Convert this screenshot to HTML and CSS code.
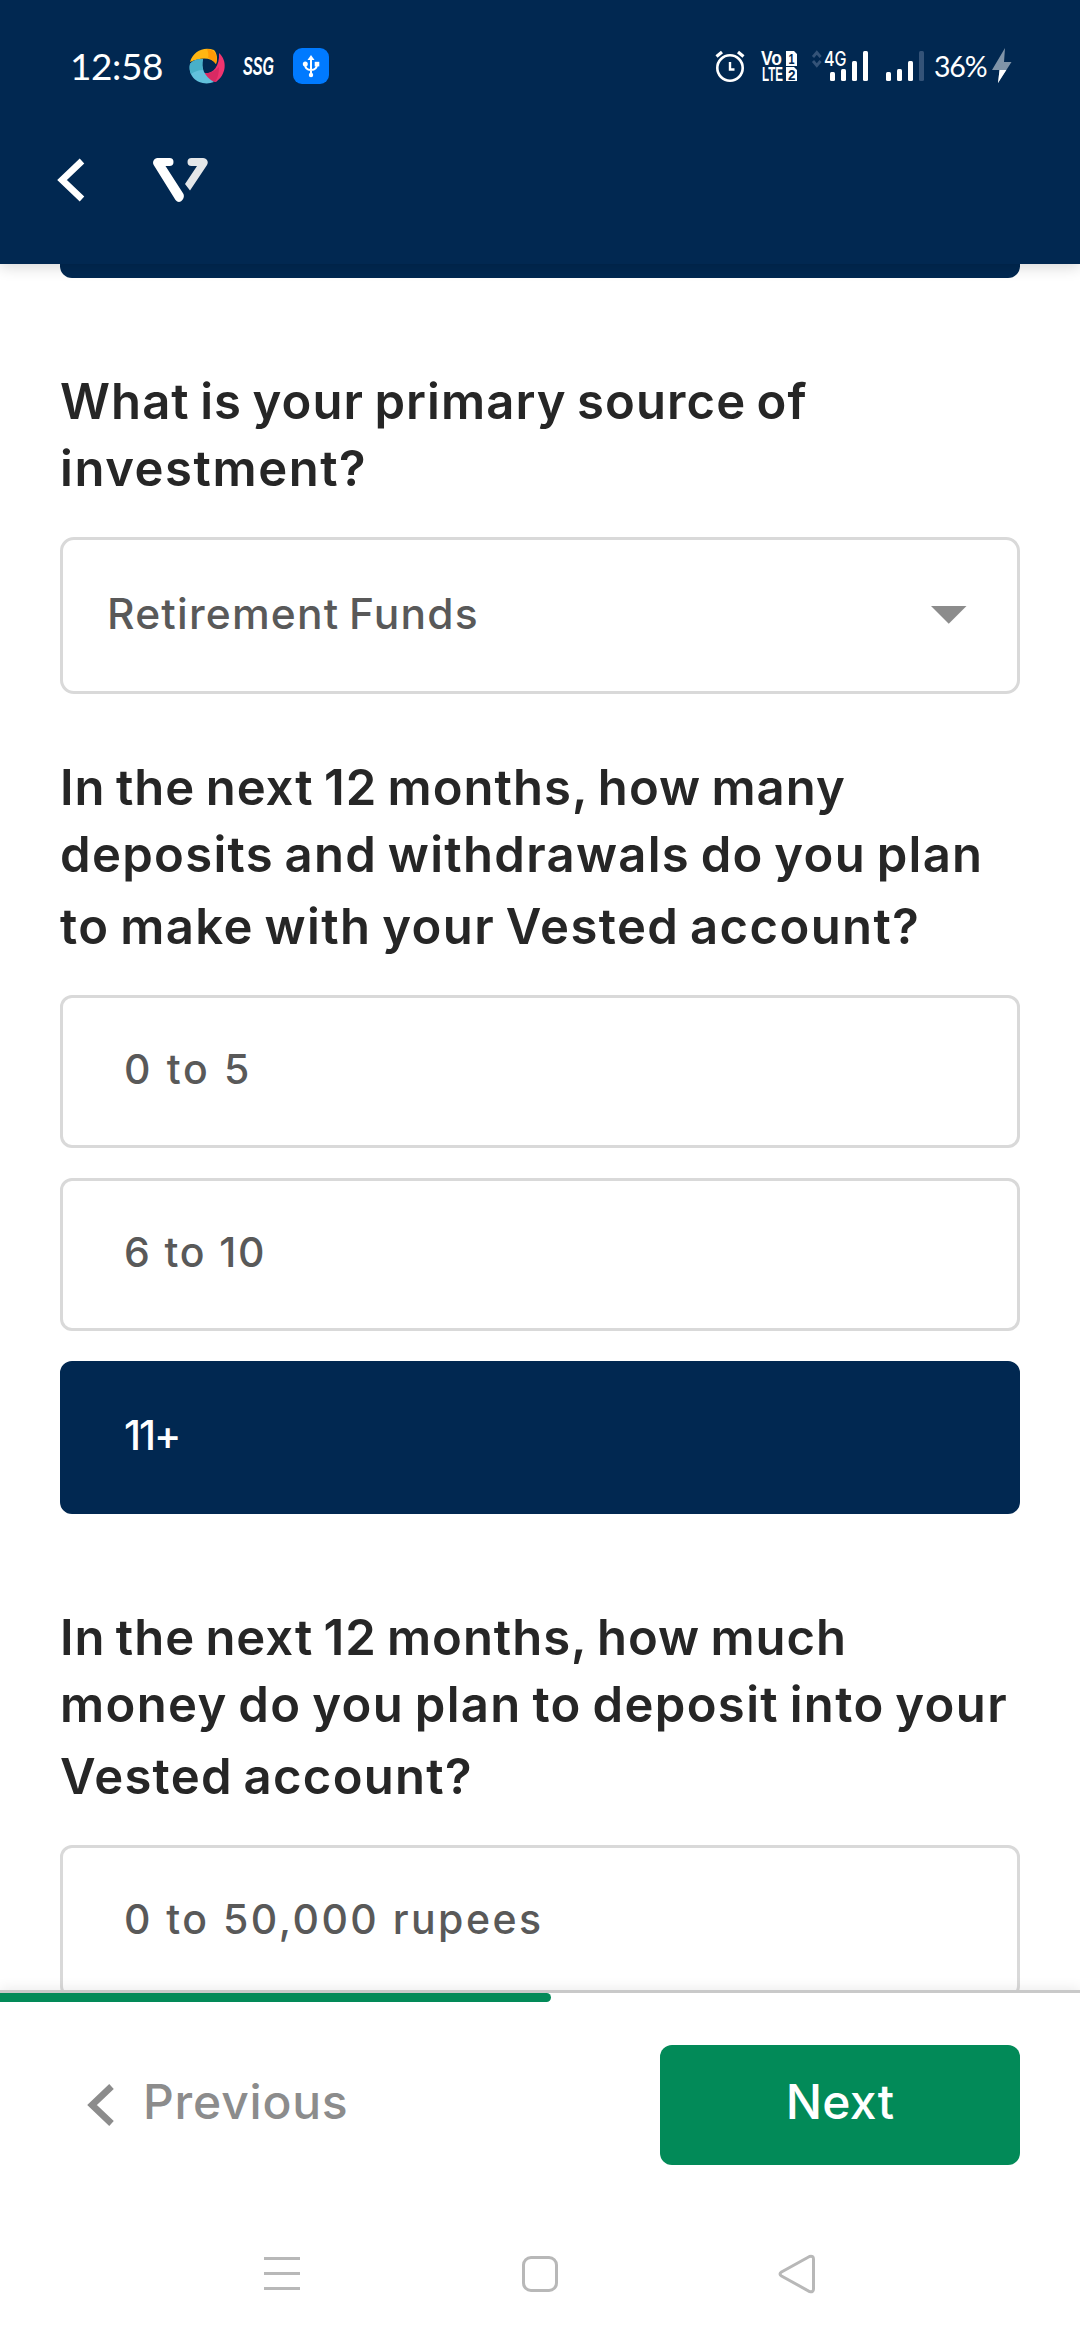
FILE: index.html
```
<!DOCTYPE html>
<html lang="en">
<head>
<meta charset="utf-8">
<title>Vested</title>
<link rel="stylesheet" href="styles.css">
</head>
<body>
<div class="screen">
  <header class="top">
    <div class="status">
      <div class="status-left">
        <span class="clock">12:58</span>
        <svg class="swirl" width="36" height="36" viewBox="0 0 36 36">
          <path d="M1 14C4 3 15-2 25 2c3 3 4 9 2 14C22 9 12 9 1 14z" fill="#ffb612"/>
          <path d="M18 1c8 0 11 7 9 15-2-3-5-5-8-6 1-3 0-6-1-9z" fill="#ff9a05"/>
          <path d="M30 5c9 8 7 22-3 29-6-1-11-4-13-9 8 2 17-5 16-20z" fill="#f0346f"/>
          <path d="M14 25c6 1 11-1 16-6 0 6-1 11-4 15-5-2-9-5-12-9z" fill="#d92a63"/>
          <path d="M1 16c3-4 8-5 13-5-2 9 1 17 11 23C12 39-2 30 1 16z" fill="#62c1dc"/>
          <path d="M1 16c3-4 8-5 13-5-1 4-1 8 0 11-5 0-9 2-12 4-1-3-2-6-1-10z" fill="#48b0c8"/>
        </svg>
        <svg class="ssg" width="34" height="22" viewBox="0 0 34 22"><text class="cond" x="1" y="20" font-size="25" font-style="italic" textLength="31" lengthAdjust="spacingAndGlyphs">SSG</text></svg>
        <svg width="36" height="36" viewBox="0 0 36 36">
          <rect width="36" height="36" rx="9" fill="#007aff"/>
          <g fill="none" stroke="#fff" stroke-width="2"><path d="M18 10v17M12 16c0 4 2 6 6 6s6-2 6-6"/></g>
          <g fill="#fff"><path d="M14.500 12 18 7l3.500 5z"/><circle cx="12.300" cy="16" r="2.500"/><circle cx="18" cy="27" r="2.200"/><rect x="21.700" y="13.800" width="4.600" height="4.600"/></g>
        </svg>
      </div>
      <div class="status-right">
        <svg class="alarm" width="30" height="32" viewBox="0 0 30 32"><g fill="none" stroke="#fff" stroke-width="2.600"><circle cx="15" cy="18" r="12.700"/><path d="M15 12v7.500h4.500" stroke-width="2.400"/><path d="M1.500 6.500 7 2M28.500 6.500 23 2" stroke-width="3.200"/></g></svg>
        <svg class="volte" width="37" height="32" viewBox="0 0 37 32">
          <g class="cond"><text x="0" y="15" font-size="20" textLength="21" lengthAdjust="spacingAndGlyphs">Vo</text><text x="1" y="31" font-size="20" textLength="21" lengthAdjust="spacingAndGlyphs">LTE</text></g>
          <path d="M25 1h8l3 3v12H25zM25 17h8l3 3v11H25z" fill="#fff"/>
          <g class="cond-dark" font-size="15"><text x="27.500" y="14" textLength="6" lengthAdjust="spacingAndGlyphs">1</text><text x="27" y="29.500" textLength="7.500" lengthAdjust="spacingAndGlyphs">2</text></g>
        </svg>
        <svg class="sig4g" width="57" height="32" viewBox="0 0 57 32">
          <path d="m1 7 3.800-4.500L8.600 7M1 11l3.800 4.500L8.600 11" fill="none" stroke="#345378" stroke-width="2.800"/>
          <text class="net" x="12" y="16" font-size="20" textLength="22.500" lengthAdjust="spacingAndGlyphs">4G</text>
          <g fill="#fff"><rect x="18" y="22" width="5" height="9" rx="1.500"/><rect x="29" y="19" width="5" height="12" rx="1.500"/><rect x="40" y="11" width="5" height="20" rx="1.500"/><rect x="51" y="1" width="5" height="30" rx="1.500"/></g>
        </svg>
        <svg class="sig" width="40" height="32" viewBox="0 0 40 32"><g fill="#fff"><rect x="1" y="22" width="5" height="9" rx="1.500"/><rect x="12" y="19" width="5" height="12" rx="1.500"/><rect x="23" y="11" width="5" height="20" rx="1.500"/></g><rect x="34" y="1" width="5" height="30" rx="1.500" fill="#345378"/></svg>
        <span class="battery">36%</span>
        <svg class="bolt" width="20" height="36" viewBox="0 0 20 36"><path d="M13 0 0 22h7.500L6 35l13.500-21H12z" fill="#8094a8"/><path d="M0 22h14.300L6 35 7.500 22z" fill="#fff"/></svg>
      </div>
    </div>
    <div class="appbar">
      <svg width="28" height="44" viewBox="0 0 28 44"><path d="M24 3 4 22l20 19" fill="none" stroke="#fff" stroke-width="6.600"/></svg>
      <svg class="logo" width="55" height="45" viewBox="0 0 55 45">
        <path d="M4.500 0h12a4 4 0 0 1 0 8h-4l18 28c2 5-4 11-8 6L.7 7C-1 4 1 0 4.500 0z" fill="#fff"/>
        <path d="M38.500 0H50c4 0 6 4 4 7L37 32.500l-5-6.500L44 8h-5.500a4 4 0 0 1 0-8z" fill="#e4e7e9"/>
      </svg>
    </div>
  </header>

  <main class="form">
    <div class="option option-prev"></div>

    <h2 class="question">
      <span class="q1a">What is your primary source of</span>
      <span class="q1b">investment?</span>
    </h2>
    <div class="select">
      <span class="value">Retirement Funds</span>
      <svg width="36" height="18" viewBox="0 0 36 18"><path d="M0 0h35.500L17.750 17.800z" fill="#8c8c8c"/></svg>
    </div>

    <h2 class="question question-deposits">
      <span class="q2a">In the next 12 months, how many</span>
      <span class="q2b">deposits and withdrawals do you plan</span>
      <span class="q2c">to make with your Vested account?</span>
    </h2>
    <div class="options">
      <div class="option o1">0 to 5</div>
      <div class="option o2">6 to 10</div>
      <div class="option o3 selected">11+</div>
    </div>

    <h2 class="question question-money">
      <span class="q3a">In the next 12 months, how much</span>
      <span class="q3b">money do you plan to deposit into your</span>
      <span class="q3c">Vested account?</span>
    </h2>
    <div class="options">
      <div class="option o4">0 to 50,000 rupees</div>
    </div>
  </main>

  <footer class="bottom">
    <div class="progress"></div>
    <div class="actions">
      <div class="previous">
        <svg width="28" height="44" viewBox="0 0 28 44"><path d="M24.500 3.500 5 22l19.500 18.500" fill="none" stroke="#8c8c8c" stroke-width="6.600"/></svg>
        <span>Previous</span>
      </div>
      <div class="next"><span>Next</span></div>
    </div>
    <nav class="sysnav">
      <svg width="38" height="42" viewBox="0 0 38 42"><path d="M1 5.500h36M1 20.500h36M1 35.500h36" stroke="#b8b8b8" stroke-width="3"/></svg>
      <svg width="38" height="42" viewBox="0 0 38 42"><rect x="2.500" y="4.500" width="33" height="33" rx="7.500" fill="none" stroke="#b8b8b8" stroke-width="3"/></svg>
      <svg width="38" height="42" viewBox="0 0 38 42"><path d="M31.500 3.500 3.500 19Q.5 21 3.500 23L31.500 38.500Q35.500 39.500 35.500 36V6Q35.500 2.500 31.500 3.500z" fill="none" stroke="#b8b8b8" stroke-width="3"/></svg>
    </nav>
  </footer>
</div>
</body>
</html>
```
FILE: styles.css
```
* { box-sizing: border-box; }
body { margin: 0; font-family: Inter, "Liberation Sans", sans-serif; background: #fff; }
svg { display: block; flex: none; overflow: visible; }

.screen { width: 1080px; height: 2340px; display: flex; flex-direction: column; overflow: hidden; }

/* Header */
.top { flex: none; height: 264px; background: #012851; color: #fff; position: relative; z-index: 1; box-shadow: 0 3px 14px rgba(0, 0, 0, .16); }
.status { height: 132px; display: flex; justify-content: space-between; padding: 0 68px 0 70px; }
.status-left, .status-right { display: flex; height: 132px; align-items: center; }
.clock { width: 119px; font: 400 37px/40px Lato, sans-serif; white-space: nowrap; letter-spacing: -.4px; }
.ssg { margin: 0 17px 0 17px; }
.alarm { margin-right: 16px; }
.volte { margin-right: 14px; }
.sig4g { margin-right: 16px; }
.sig { margin-right: 9px; }
.battery { width: 58px; font: 400 28.500px/36px Lato, sans-serif; white-space: nowrap; letter-spacing: -1.2px; }
.cond { font-family: "Liberation Sans", sans-serif; font-weight: 700; fill: #fff; }
.cond-dark { font-family: "Liberation Sans", sans-serif; font-weight: 700; fill: #012851; }
.net { font-family: Inter, sans-serif; font-weight: 500; fill: #fff; }
.appbar { display: flex; align-items: flex-start; padding: 26px 0 0 58px; }
.logo { margin-left: 67px; }

/* Form */
.form { flex: none; height: 1726px; padding: 0 60px; overflow: hidden; }
.question { margin: 90px 0 0; padding-bottom: 35px; font-size: 49px; line-height: 67px; font-weight: 600; color: #262626; white-space: nowrap; word-spacing: -3px; }
.question span { display: block; }
.question-deposits { margin-top: 60px; padding-bottom: 35px; }
.question-money { margin-top: 90px; padding-bottom: 35px; }
.question span:nth-child(3) { padding-top: 5px; }
.select { height: 157px; border: 3px solid #d9d9d9; border-radius: 14px; display: flex; align-items: center; justify-content: space-between; padding: 0 50px 2px 44px; font-size: 42.500px; font-weight: 450; color: #595959; word-spacing: -3px; }
.select .value { margin-top: -3px; }
.options { display: flex; flex-direction: column; gap: 30px; }
.option { height: 153px; border: 3px solid #d9d9d9; border-radius: 12px; padding: 41px 0 0 61px; font-size: 41px; line-height: 60px; font-weight: 500; color: #595959; white-space: nowrap; }
.selected { background: #012851; border-color: #012851; color: #fff; }
.option-prev { height: 14px; border-radius: 0 0 12px 12px; background: #012851; border-color: #012851; padding: 0; }

/* Tracking per line of text */
.q1a { letter-spacing: 1.08px; }
.q1b { letter-spacing: 1.57px; }
.q2a { letter-spacing: 1.01px; }
.q2b { letter-spacing: 1.3px; }
.q2c { letter-spacing: 1.4px; }
.q3a { letter-spacing: .97px; }
.q3b { letter-spacing: 1.36px; }
.q3c { letter-spacing: 1.3px; }
.value { letter-spacing: 1.2px; }
.o1 { letter-spacing: 2.67px; }
.o2 { letter-spacing: 1.83px; }
.o3 { letter-spacing: -2px; }
.o4 { letter-spacing: 2.47px; }

/* Footer */
.bottom { flex: none; height: 350px; border-top: 3px solid #c9c9c9; position: relative; z-index: 1; background: #fff; box-shadow: 0 -2px 12px rgba(0, 0, 0, .08); }
.progress { width: 551px; height: 9px; background: #028a58; border-radius: 0 5px 5px 0; }
.actions { display: flex; justify-content: space-between; margin-top: 43px; padding: 0 60px 0 87px; height: 120px; font-size: 48px; line-height: 60px; font-weight: 500; }
.previous { display: flex; align-items: center; color: #8c8c8c; letter-spacing: .8px; }
.previous span { margin: -6px 0 0 28px; }
.next { width: 360px; background: #028a58; border-radius: 12px; color: #fff; display: flex; align-items: center; justify-content: center; letter-spacing: .3px; }
.next span { margin-top: -6px; }
.sysnav { display: flex; justify-content: space-between; padding: 88px 264px 0 263px; }
```
